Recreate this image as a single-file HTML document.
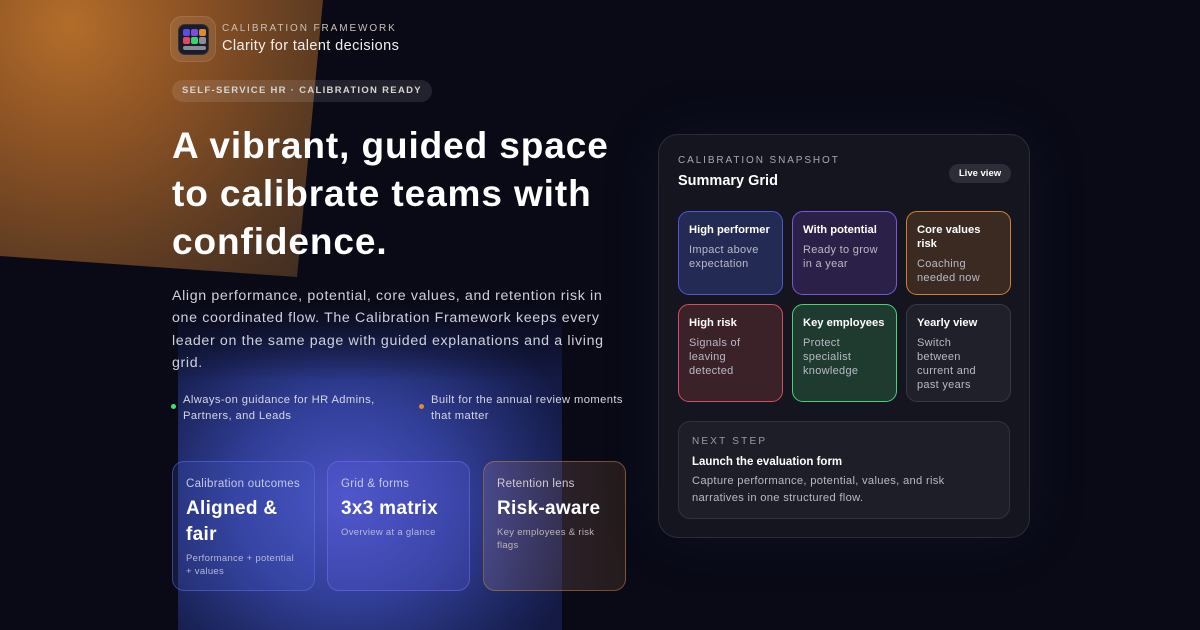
<!DOCTYPE html>
<html><head><meta charset="utf-8"><style>
*{margin:0;padding:0;box-sizing:border-box}
body{width:1200px;height:630px;overflow:hidden;background:#090a16;font-family:"Liberation Sans",sans-serif;position:relative;color:#fff}
.abs{position:absolute}
.orange{left:0;top:0;width:330px;height:280px;clip-path:polygon(0 0,323px 0,297px 277px,0 256px);background:radial-gradient(circle at 70px 25px,#b36d2a 0%,#8a5124 35%,#5a3a22 70%,#3a2a22 100%)}
.blue{left:178px;top:300px;width:384px;height:330px;background:radial-gradient(ellipse 240px 220px at 170px 200px,#4b54c4 0%,#323f98 45%,#1d2761 80%,#141a44 100%);-webkit-mask:linear-gradient(to bottom,transparent 0,#000 80px)}
.logo{left:170px;top:16px;width:46px;height:46px;border-radius:12px;background:rgba(255,255,255,.08);border:1px solid rgba(255,255,255,.1)}
.logo .in{position:absolute;left:7px;top:7px;width:31px;height:31px;border-radius:7px;background:#1b1c2a;border:1px solid #333}
.c{position:absolute;width:7px;height:7px;border-radius:2px}
.kick{left:222px;top:23px;font-size:10px;letter-spacing:1.9px;color:#c9c0b8}
.tag{left:222px;top:38px;font-size:14.5px;color:#f2f0ee;letter-spacing:.4px}
.pill{left:172px;top:80px;height:22px;padding:0 10px;border-radius:11px;background:rgba(255,255,255,.1);font-size:9.5px;font-weight:bold;letter-spacing:1.3px;line-height:22px;color:#d8d4d0}
h1{position:absolute;left:172px;top:122px;font-size:37px;line-height:48px;font-weight:bold;letter-spacing:.9px;width:480px;white-space:nowrap}
.p{left:172px;top:285px;font-size:14.2px;line-height:22.3px;color:#cfd0db;white-space:nowrap;letter-spacing:.65px}
.b{font-size:11.2px;line-height:16px;color:#d4d6e4;white-space:nowrap;letter-spacing:.4px}
.dot{width:5px;height:5px;border-radius:3px}
.card{top:461px;height:130px;border-radius:12px;padding:16px 13px;white-space:nowrap}
.card .l{font-size:11.5px;color:#c4c8e8;letter-spacing:.3px}
.card .v{font-size:19px;font-weight:bold;line-height:26px;margin-top:6px;letter-spacing:.3px}
.card .s{font-size:9.5px;line-height:13px;color:#b5b9d8;margin-top:4px;letter-spacing:.3px}
.panel{left:658px;top:134px;width:372px;height:404px;border-radius:20px;background:#15151f;border:1px solid #2c2c38;box-shadow:0 0 60px rgba(60,60,90,.15)}
.g{position:absolute;width:105px;border-radius:11px;padding:11px 10px;font-size:11px;line-height:14px;white-space:nowrap;letter-spacing:.3px}
.g b{display:block;color:#fff;font-size:11.2px;margin-bottom:6px;letter-spacing:0}
.g span{color:#b9b9c4}
</style></head><body>
<div class="abs orange"></div>
<div class="abs blue"></div>
<div class="abs logo"><div class="in">
<div class="c" style="left:4px;top:4px;background:#5a4ee0"></div>
<div class="c" style="left:12px;top:4px;background:#7a4fe0"></div>
<div class="c" style="left:20px;top:4px;background:#d98a33"></div>
<div class="c" style="left:4px;top:12px;background:#e04a5f"></div>
<div class="c" style="left:12px;top:12px;background:#39d46f"></div>
<div class="c" style="left:20px;top:12px;background:#8c8e98"></div>
<div class="c" style="left:4px;top:21px;width:23px;height:4px;background:#8a8c96"></div>
</div></div>
<div class="abs kick">CALIBRATION FRAMEWORK</div>
<div class="abs tag">Clarity for talent decisions</div>
<div class="abs pill">SELF-SERVICE HR · CALIBRATION READY</div>
<h1>A vibrant, guided space<br>to calibrate teams with<br>confidence.</h1>
<div class="abs p">Align performance, potential, core values, and retention risk in<br>one coordinated flow. The Calibration Framework keeps every<br>leader on the same page with guided explanations and a living<br>grid.</div>
<div class="abs dot" style="left:171px;top:404px;background:#3ee07a"></div>
<div class="abs b" style="left:183px;top:392px">Always-on guidance for HR Admins,<br>Partners, and Leads</div>
<div class="abs dot" style="left:419px;top:404px;background:#e08a3a"></div>
<div class="abs b" style="left:431px;top:392px">Built for the annual review moments<br>that matter</div>
<div class="abs card" style="left:172px;width:143px;background:rgba(80,100,220,.18);border:1px solid rgba(100,120,240,.45)"><div class="l">Calibration outcomes</div><div class="v">Aligned &amp;<br>fair</div><div class="s">Performance + potential<br>+ values</div></div>
<div class="abs card" style="left:327px;width:143px;background:rgba(100,100,240,.2);border:1px solid rgba(120,110,240,.5)"><div class="l">Grid &amp; forms</div><div class="v">3x3 matrix</div><div class="s">Overview at a glance</div></div>
<div class="abs card" style="left:483px;width:143px;background:linear-gradient(90deg,rgba(150,120,150,.28),rgba(90,60,40,.35));border:1px solid rgba(200,130,70,.5)"><div class="l" style="color:#d2ccd0">Retention lens</div><div class="v">Risk-aware</div><div class="s" style="color:#bdb4b4">Key employees &amp; risk<br>flags</div></div>
<div class="abs panel">
<div class="abs" style="left:19px;top:20px;font-size:10px;letter-spacing:1.9px;color:#a9a9b4">CALIBRATION SNAPSHOT</div>
<div class="abs" style="left:19px;top:38px;font-size:14.5px;font-weight:bold">Summary Grid</div>
<div class="abs" style="left:290px;top:29px;width:62px;height:19px;border-radius:10px;background:#2d2d38;font-size:9.5px;font-weight:bold;line-height:19px;text-align:center">Live view</div>
<div class="g" style="left:19px;top:76px;height:84px;background:#232b55;border:1px solid #4a5bd0"><b>High performer</b><span>Impact above<br>expectation</span></div>
<div class="g" style="left:133px;top:76px;height:84px;background:#2b2148;border:1px solid #7a55d8"><b>With potential</b><span>Ready to grow<br>in a year</span></div>
<div class="g" style="left:247px;top:76px;height:84px;background:#3a2a22;border:1px solid #d0802f"><b>Core values<br>risk</b><span>Coaching<br>needed now</span></div>
<div class="g" style="left:19px;top:169px;height:98px;background:#3b2229;border:1px solid #d04f60"><b>High risk</b><span>Signals of<br>leaving<br>detected</span></div>
<div class="g" style="left:133px;top:169px;height:98px;background:#1f3a2e;border:1px solid #46d27a"><b>Key employees</b><span>Protect<br>specialist<br>knowledge</span></div>
<div class="g" style="left:247px;top:169px;height:98px;background:#20202b;border:1px solid #383844"><b>Yearly view</b><span>Switch<br>between<br>current and<br>past years</span></div>
<div class="abs" style="left:19px;top:286px;width:332px;height:98px;border-radius:12px;background:#1e1e28;border:1px solid #31313d;padding:14px 13px">
<div style="font-size:10px;letter-spacing:2.2px;color:#9a9aa6">NEXT STEP</div>
<div style="font-size:11.5px;font-weight:bold;margin-top:9px">Launch the evaluation form</div>
<div style="font-size:11.2px;line-height:16.5px;color:#b9b9c4;margin-top:5px;letter-spacing:.3px">Capture performance, potential, values, and risk<br>narratives in one structured flow.</div>
</div>
</div>
</body></html>
